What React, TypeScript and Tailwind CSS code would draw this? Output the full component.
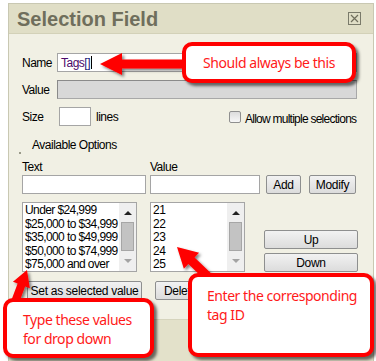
import React from "react";

const ui = { fontFamily: '"Liberation Sans", Arial, sans-serif' };
const callFont = { fontFamily: '"Noto Sans", "Open Sans", sans-serif' };

// arrow outline from tail to tip
function arrowPoints(tx: number, ty: number, hx: number, hy: number, shaft: number, headLen: number, headW: number) {
  const dx = hx - tx;
  const dy = hy - ty;
  const len = Math.hypot(dx, dy);
  const ux = dx / len;
  const uy = dy / len;
  const px = -uy;
  const py = ux;
  const bx = hx - ux * headLen;
  const by = hy - uy * headLen;
  const pts = [
    [tx + px * shaft, ty + py * shaft],
    [bx + px * shaft, by + py * shaft],
    [bx + px * headW, by + py * headW],
    [hx, hy],
    [bx - px * headW, by - py * headW],
    [bx - px * shaft, by - py * shaft],
    [tx - px * shaft, ty - py * shaft],
  ];
  return pts.map((p) => p.join(",")).join(" ");
}

function Btn({ children, className = "" }: { children: React.ReactNode; className?: string }) {
  return (
    <div
      className={
        "flex items-center justify-center border border-[#8e8f8f] rounded-[2px] bg-gradient-to-b from-[#f2f2f2] to-[#dcdcdc] text-[12px] text-black tracking-[-0.3px] " +
        className
      }
    >
      {children}
    </div>
  );
}

function ScrollBar() {
  return (
    <div className="w-[17px] h-full bg-[#efefef] flex flex-col items-center shrink-0">
      <div className="h-[19px] flex items-center justify-center">
        <div className="w-0 h-0 border-l-[4px] border-r-[4px] border-b-[4px] border-l-transparent border-r-transparent border-b-[#222]" />
      </div>
      <div className="w-[13px] h-[29px] bg-[#c3c3c3] border border-[#a6a6a6]" />
      <div className="flex-1 flex items-center justify-center">
        <div className="w-0 h-0 border-l-[4px] border-r-[4px] border-t-[4px] border-l-transparent border-r-transparent border-t-[#a3a3a3]" />
      </div>
    </div>
  );
}

function Callout({ className, children }: { className: string; children: React.ReactNode }) {
  return (
    <div
      className={
        "absolute border-[4px] border-[#ff0000] rounded-[10px] bg-white shadow-[3px_3px_3px_rgba(0,0,0,0.55)] text-[#ff1a1a] text-[14px] leading-[19px] tracking-[-0.45px] " +
        className
      }
      style={callFont}
    >
      {children}
    </div>
  );
}

export default function App() {
  const opts = ["Under $24,999", "$25,000 to $34,999", "$35,000 to $49,999", "$50,000 to $74,999", "$75,000 and over"];
  const ids = ["21", "22", "23", "24", "25"];
  return (
    <div className="relative w-[376px] h-[361px] bg-white overflow-hidden" style={ui}>
      <div className="ml-[8px] mt-[3px] w-[366px] h-[358px] border-l border-r border-t border-[#c9c8b2] bg-[#f1f0e4] flex flex-col">
        {/* title bar */}
        <div className="h-[30px] bg-[#e0dec6] flex items-center justify-between pl-[8px] pr-[12px] border-b border-[#d3d1b8]">
          <span className="text-[20px] font-bold text-[#6f6e5c] leading-none">Selection Field</span>
          <div className="w-[13px] h-[13px] border border-[#7a7a6a] flex items-center justify-center">
            <svg width="9" height="9" viewBox="0 0 9 9">
              <path d="M1 1L8 8M8 1L1 8" stroke="#6f6e5c" strokeWidth="1.2" />
            </svg>
          </div>
        </div>

        {/* body */}
        <div className="flex-1 flex flex-col pl-[13px] text-[12px] text-black tracking-[-0.5px]">
          <div className="mt-[19px] flex items-center h-[19px]">
            <span className="w-[35px]">Name</span>
            <div className="w-[300px] h-[19px] border border-[#a5a5a5] bg-white flex items-center pl-[3px]">
              <span className="text-[#4b0a6b]">Tags</span>
              <span className="text-[#1a1a7a]">[]</span>
              <span className="w-px h-[13px] bg-black ml-px" />
            </div>
          </div>
          <div className="mt-[8px] flex items-center h-[19px]">
            <span className="w-[35px]">Value</span>
            <div className="w-[300px] h-[19px] border border-[#a8a8a8] border-t-[#8a8a8a] border-l-[#8a8a8a] bg-[#d8d8d8]" />
          </div>
          <div className="mt-[8px] flex items-center h-[19px] whitespace-nowrap">
            <span className="w-[37px]">Size</span>
            <div className="w-[32px] h-[19px] border border-[#a5a5a5] bg-white" />
            <span className="ml-[5px] w-[24px]">lines</span>
            <div className="ml-[109px] w-[12px] h-[12px] border border-[#8f8f8f] rounded-[2px] bg-gradient-to-b from-[#dcdcdc] to-[#f7f7f7]" />
            <span className="ml-[4px] mt-[4px] tracking-[-0.75px]">Allow multiple selections</span>
          </div>

          <div className="mt-[12px] flex items-center h-[14px] pl-[10px]">Available Options</div>
          <div className="h-[2px] w-[2px] ml-[-3px] mt-[0px] bg-[#9a9a8a]" />

          <div className="mt-[6px] flex h-[14px] items-center">
            <span className="w-[128px]">Text</span>
            <span>Value</span>
          </div>
          <div className="mt-[1px] flex items-center h-[19px]">
            <div className="w-[124px] h-[19px] border border-[#a5a5a5] bg-white" />
            <div className="ml-[4px] w-[110px] h-[19px] border border-[#a5a5a5] bg-white" />
            <Btn className="ml-[6px] w-[35px] h-[19px]">Add</Btn>
            <Btn className="ml-[8px] w-[47px] h-[19px]">Modify</Btn>
          </div>

          <div className="mt-[8px] flex h-[70px]">
            <div className="w-[115px] h-[70px] border border-[#a5a5a5] bg-white flex">
              <div className="flex-1 pl-[2px] pt-[1px] leading-[13.6px] text-[12px] tracking-[-0.6px] text-[#000] whitespace-nowrap overflow-hidden">
                {opts.map((o) => (
                  <div key={o}>{o}</div>
                ))}
              </div>
              <ScrollBar />
            </div>
            <div className="ml-[13px] w-[95px] h-[70px] border border-[#a5a5a5] bg-white flex">
              <div className="flex-1 pl-[2px] pt-[1px] leading-[13.6px] text-[12px]">
                {ids.map((o) => (
                  <div key={o}>{o}</div>
                ))}
              </div>
              <ScrollBar />
            </div>
            <div className="ml-[19px] flex flex-col justify-end pb-0 gap-[4px]">
              <Btn className="w-[94px] h-[19px]">Up</Btn>
              <Btn className="w-[94px] h-[19px]">Down</Btn>
            </div>
          </div>

          <div className="mt-[9px] flex h-[19px]">
            <Btn className="ml-[5px] w-[115px] h-[19px]">Set as selected value</Btn>
            <Btn className="ml-[13px] w-[80px] h-[19px] justify-start pl-[8px]">Delete</Btn>
          </div>
        </div>

        {/* footer */}
        <div className="h-[42px] bg-[#e3e1ca] border-t border-[#d6d4bd]" />
      </div>

      {/* arrows */}
      <svg className="absolute left-0 top-0" width="376" height="361">
        <defs>
          <filter id="sh" x="-20%" y="-20%" width="140%" height="140%">
            <feDropShadow dx="2" dy="2" stdDeviation="1.5" floodColor="#000" floodOpacity="0.5" />
          </filter>
        </defs>
        <polygon points={arrowPoints(190, 64, 100, 64, 4.5, 22, 11)} fill="#ff0000" filter="url(#sh)" />
        <polygon points={arrowPoints(12, 310, 27, 270, 4, 16, 9)} fill="#ff0000" filter="url(#sh)" />
        <polygon points={arrowPoints(222, 290, 177, 247, 4.5, 20, 11)} fill="#ff0000" filter="url(#sh)" />
      </svg>

      <Callout className="left-[182px] top-[42px] w-[174px] h-[41px] flex items-center justify-center">
        Should always be this
      </Callout>
      <Callout className="left-[3px] top-[298px] w-[151px] h-[60px] pl-[16px] pt-[8px]">
        <div>Type these values</div>
        <div>for drop down</div>
      </Callout>
      <Callout className="left-[188px] top-[273px] w-[186px] h-[84px] pl-[15px] pt-[9px]">
        <div>Enter the corresponding</div>
        <div>tag ID</div>
      </Callout>
    </div>
  );
}
